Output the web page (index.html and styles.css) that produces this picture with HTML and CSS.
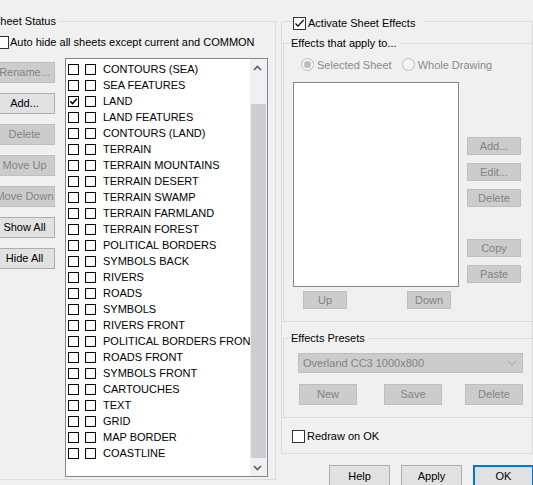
FILE: index.html
```html
<!DOCTYPE html>
<html>
<head>
<meta charset="utf-8">
<title>Sheets and Effects</title>
<link rel="stylesheet" href="styles.css">
</head>
<body>
<div class="dialog">
  <fieldset class="group sheet-status">
    <legend class="legend-left">Sheet Status</legend>
    <div class="check-row autohide"><span class="cb"></span><span class="lbl">Auto hide all sheets except current and COMMON</span></div>
    <div class="status-main">
      <div class="side-buttons">
        <div class="btn disabled">Rename...</div>
        <div class="btn">Add...</div>
        <div class="btn disabled">Delete</div>
        <div class="btn disabled">Move Up</div>
        <div class="btn disabled">Move Down</div>
        <div class="btn">Show All</div>
        <div class="btn">Hide All</div>
      </div>
      <div class="sheet-list">
        <div class="items">
          <div class="item"><span class="box"></span><span class="box"></span><span class="name">CONTOURS (SEA)</span></div>
          <div class="item"><span class="box"></span><span class="box"></span><span class="name">SEA FEATURES</span></div>
          <div class="item"><span class="box"><svg viewBox="0 0 9 9" width="9" height="9"><path d="M1.3 4.3 L3.5 6.6 L7.8 1.8" fill="none" stroke="#000" stroke-width="1.5"/></svg></span><span class="box"></span><span class="name">LAND</span></div>
          <div class="item"><span class="box"></span><span class="box"></span><span class="name">LAND FEATURES</span></div>
          <div class="item"><span class="box"></span><span class="box"></span><span class="name">CONTOURS (LAND)</span></div>
          <div class="item"><span class="box"></span><span class="box"></span><span class="name">TERRAIN</span></div>
          <div class="item"><span class="box"></span><span class="box"></span><span class="name">TERRAIN MOUNTAINS</span></div>
          <div class="item"><span class="box"></span><span class="box"></span><span class="name">TERRAIN DESERT</span></div>
          <div class="item"><span class="box"></span><span class="box"></span><span class="name">TERRAIN SWAMP</span></div>
          <div class="item"><span class="box"></span><span class="box"></span><span class="name">TERRAIN FARMLAND</span></div>
          <div class="item"><span class="box"></span><span class="box"></span><span class="name">TERRAIN FOREST</span></div>
          <div class="item"><span class="box"></span><span class="box"></span><span class="name">POLITICAL BORDERS</span></div>
          <div class="item"><span class="box"></span><span class="box"></span><span class="name">SYMBOLS BACK</span></div>
          <div class="item"><span class="box"></span><span class="box"></span><span class="name">RIVERS</span></div>
          <div class="item"><span class="box"></span><span class="box"></span><span class="name">ROADS</span></div>
          <div class="item"><span class="box"></span><span class="box"></span><span class="name">SYMBOLS</span></div>
          <div class="item"><span class="box"></span><span class="box"></span><span class="name">RIVERS FRONT</span></div>
          <div class="item"><span class="box"></span><span class="box"></span><span class="name">POLITICAL BORDERS FRONT</span></div>
          <div class="item"><span class="box"></span><span class="box"></span><span class="name">ROADS FRONT</span></div>
          <div class="item"><span class="box"></span><span class="box"></span><span class="name">SYMBOLS FRONT</span></div>
          <div class="item"><span class="box"></span><span class="box"></span><span class="name">CARTOUCHES</span></div>
          <div class="item"><span class="box"></span><span class="box"></span><span class="name">TEXT</span></div>
          <div class="item"><span class="box"></span><span class="box"></span><span class="name">GRID</span></div>
          <div class="item"><span class="box"></span><span class="box"></span><span class="name">MAP BORDER</span></div>
          <div class="item"><span class="box"></span><span class="box"></span><span class="name">COASTLINE</span></div>
        </div>
        <div class="scrollbar">
          <div class="arrow"><svg viewBox="0 0 9 6" width="9" height="6"><path d="M1 5 L4.5 1.5 L8 5" fill="none" stroke="#606060" stroke-width="1.6"/></svg></div>
          <div class="track"><div class="thumb"></div></div>
          <div class="arrow"><svg viewBox="0 0 9 6" width="9" height="6"><path d="M1 1 L4.5 4.5 L8 1" fill="none" stroke="#606060" stroke-width="1.6"/></svg></div>
        </div>
      </div>
    </div>
  </fieldset>

  <div class="right-col">
    <fieldset class="group effects">
      <legend class="legend-check"><span class="cb"><svg viewBox="0 0 11 11" width="11" height="11"><path d="M1.5 5.5 L4 8.2 L9.6 2" fill="none" stroke="#000" stroke-width="1.2"/></svg></span><span class="lbl">Activate Sheet Effects</span></legend>

      <fieldset class="group inner apply">
        <legend class="legend-inner">Effects that apply to...</legend>
        <div class="radios">
          <div class="radio-item"><span class="radio on"></span><span class="lbl dim">Selected Sheet</span></div>
          <div class="radio-item second"><span class="radio"></span><span class="lbl dim">Whole Drawing</span></div>
        </div>
        <div class="apply-body">
          <div class="effects-list"></div>
          <div class="effect-buttons">
            <div class="btn small disabled">Add...</div>
            <div class="btn small disabled">Edit...</div>
            <div class="btn small disabled gap-after">Delete</div>
            <div class="btn small disabled">Copy</div>
            <div class="btn small disabled">Paste</div>
          </div>
          <div class="updown">
            <div class="btn small disabled updown-btn">Up</div>
            <div class="btn small disabled updown-btn">Down</div>
          </div>
        </div>
      </fieldset>

      <fieldset class="group inner presets">
        <legend class="legend-inner">Effects Presets</legend>
        <div class="combo"><span>Overland CC3 1000x800</span><svg viewBox="0 0 10 6" width="10" height="6"><path d="M1 1 L5 5 L9 1" fill="none" stroke="#a8a8a8" stroke-width="1"/></svg></div>
        <div class="preset-buttons">
          <div class="btn disabled preset-btn">New</div>
          <div class="btn disabled preset-btn save">Save</div>
          <div class="btn disabled preset-btn last">Delete</div>
        </div>
      </fieldset>

      <div class="check-row redraw"><span class="cb"></span><span class="lbl">Redraw on OK</span></div>
    </fieldset>

    <div class="dialog-buttons">
      <div class="btn dlg">Help</div>
      <div class="btn dlg">Apply</div>
      <div class="btn dlg default">OK</div>
    </div>
  </div>
</div>
</body>
</html>
```

FILE: styles.css
```css
* { box-sizing: border-box; }
html, body { margin: 0; padding: 0; }
body {
  background: #f0f0f0;
  font-family: "Liberation Sans", Arial, sans-serif;
  font-size: 11px;
  color: #000;
  width: 533px;
  height: 485px;
  overflow: hidden;
}
.dialog { display: flex; align-items: flex-start; }

.group {
  margin: 0;
  padding: 0;
  border: 1px solid #dcdcdc;
  min-width: 0;
}

/* generic controls */
.btn {
  display: flex;
  align-items: center;
  justify-content: center;
  height: 21px;
  background: #e1e1e1;
  border: 1px solid #adadad;
  white-space: nowrap;
  line-height: 13px;
}
.btn.disabled { background: #cccccc; border-color: #bfbfbf; color: #838383; }
.btn.small { height: 18px; }

.cb {
  width: 13px;
  height: 13px;
  border: 1px solid #333;
  background: #fff;
  display: flex;
  align-items: center;
  justify-content: center;
  flex: none;
}
.check-row { display: flex; align-items: center; height: 13px; line-height: 13px; }
.check-row .lbl { margin-left: 2px; white-space: nowrap; }
.autohide .lbl { margin-left: 1px; }

/* left group */
.sheet-status {
  margin: 16px 0 0 -10px;
  width: 286px;
  padding: 0 7px 2px 3px;
}
.legend-left {
  height: 11px;
  line-height: 11px;
  padding: 0 3px 0 0;
  margin-left: -1px;
}
.autohide { margin: 9px 0 0 2px; }
.status-main { display: flex; margin-top: 9px; gap: 10px; }
.side-buttons {
  display: flex;
  flex-direction: column;
  gap: 10px;
  padding-top: 4px;
  width: 61px;
  flex: none;
}
.sheet-list {
  width: 203px;
  height: 419px;
  border: 1px solid #828790;
  background: #fff;
  display: flex;
}
.items {
  flex: 1;
  overflow: hidden;
  padding: 2px 0 0 2px;
}
.item { display: flex; align-items: flex-start; height: 16px; line-height: 16px; white-space: nowrap; }
.box {
  width: 11px;
  height: 11px;
  border: 1px solid #000;
  margin-top: 3px;
  margin-right: 6px;
  flex: none;
  display: flex;
  align-items: center;
  justify-content: center;
  background: #fff;
}
.box + .box { margin-right: 7px; }
.scrollbar {
  width: 17px;
  flex: none;
  background: #f0f0f0;
  display: flex;
  flex-direction: column;
}
.arrow { height: 17px; display: flex; align-items: center; justify-content: center; padding-right: 3px; }
.track { flex: 1; }
.thumb { margin: 28px 1px 0 1px; height: 354px; background: #cdcdcd; }

/* right column */
.right-col { margin-left: 5px; width: 252px; display: flex; flex-direction: column; }
.effects { margin-top: 17px; width: 252px; padding: 0 0 10px 0; }
.legend-check {
  height: 9px;
  display: flex;
  align-items: flex-start;
  margin-left: 11px;
  padding: 0 9px 0 0;
  line-height: 13px;
}
.legend-check .lbl { margin-left: 2px; white-space: nowrap; }

.inner { margin: 11px 0 0 1px; border-right: 0; padding: 0 0 12px 0; }
.legend-inner { height: 13px; line-height: 13px; margin-left: 6px; padding: 0 3px 0 1px; }

.radios { display: flex; margin: 8px 0 0 17px; height: 13px; align-items: center; }
.radio-item { display: flex; align-items: center; }
.radio-item.second { margin-left: 10px; }
.radio {
  width: 13px;
  height: 13px;
  border-radius: 50%;
  border: 1px solid #bcbcbc;
  background: #f4f4f4;
  display: flex;
  align-items: center;
  justify-content: center;
}
.radio.on::after { content: ""; width: 7px; height: 7px; border-radius: 50%; background: #bcbcbc; }
.radio-item .lbl { margin-left: 3px; white-space: nowrap; }
.dim { color: #8a8a8a; }

.apply-body {
  display: grid;
  grid-template-columns: 166px 54px;
  grid-template-rows: 205px 18px;
  column-gap: 8px;
  row-gap: 4px;
  margin: 11px 0 0 9px;
}
.effects-list { background: #fff; border: 1px solid #828790; }
.effect-buttons { display: flex; flex-direction: column; gap: 8px; padding-top: 55px; }
.effect-buttons .gap-after { margin-bottom: 24px; }
.updown { grid-column: 1; display: flex; justify-content: space-between; padding: 0 8px 0 10px; }
.updown-btn { width: 44px; }

.presets { margin-top: 10px; }
.combo {
  margin: 8px 0 0 14px;
  width: 225px;
  height: 20px;
  background: #cccccc;
  border: 1px solid #bfbfbf;
  color: #838383;
  display: flex;
  align-items: center;
  justify-content: space-between;
  padding: 0 5px 0 4px;
  line-height: 13px;
}
.preset-buttons { display: flex; margin: 11px 0 0 15px; width: 224px; }
.preset-btn { width: 58px; }
.preset-btn.save { margin-left: 27px; }
.preset-btn.last { margin-left: auto; }

.redraw { margin: 12px 0 0 10px; }

.dialog-buttons { display: flex; justify-content: flex-end; gap: 11px; margin: 11px -1px 0 0; }
.dlg { width: 61px; height: 23px; }
.dlg.default { border: 2px solid #0078d7; }
```
